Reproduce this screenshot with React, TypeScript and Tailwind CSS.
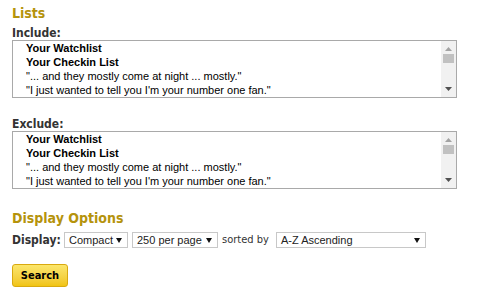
import React from "react";

const verdana = { fontFamily: '"DejaVu Sans Condensed", "DejaVu Sans", Verdana, sans-serif', fontStretch: "condensed" as const };
const arial = { fontFamily: '"Liberation Sans", Arial, sans-serif' };

function ListBox() {
  return (
    <div className="flex h-[58px] w-[445px] border border-[#a9a9a9] bg-white">
      <div className="flex-1 pl-[13px] text-[11px] leading-[14px] text-black" style={arial}>
        <div className="font-bold">Your Watchlist</div>
        <div className="font-bold">Your Checkin List</div>
        <div>"... and they mostly come at night ... mostly."</div>
        <div>"I just wanted to tell you I'm your number one fan."</div>
      </div>
      <div className="flex w-[15px] flex-col items-center bg-[#f1f1f1]">
        <svg width="7" height="4" className="mt-[6px]" viewBox="0 0 7 4">
          <path d="M3.5 0 L7 4 L0 4 Z" fill="#a3a3a3" />
        </svg>
        <div className="mt-[3px] h-[9px] w-[11px] bg-[#c1c1c1]" />
        <div className="flex-1" />
        <svg width="7" height="4" className="mb-[6px]" viewBox="0 0 7 4">
          <path d="M0 0 L7 0 L3.5 4 Z" fill="#505050" />
        </svg>
      </div>
    </div>
  );
}

function Select({ label, width }: { label: string; width: string }) {
  return (
    <div
      className={`flex h-[16px] shrink-0 items-center justify-between whitespace-nowrap border border-[#c8c8c8] bg-white pl-[4px] pr-[5px] text-[11px] text-[#222] ${width}`}
      style={arial}
    >
      <span className="leading-none">{label}</span>
      <svg width="6" height="5" viewBox="0 0 6 5">
        <path d="M0 0 L6 0 L3 5 Z" fill="#111" />
      </svg>
    </div>
  );
}

export default function App() {
  return (
    <div className="h-[294px] w-[490px] bg-white pl-[12px] pt-[4px]" style={verdana}>
      <div className="text-[14px] font-bold leading-[18px] text-[#b5930c]">Lists</div>
      <div className="mt-[5px] text-[12px] font-bold leading-[13px] text-[#333]">Include:</div>
      <ListBox />
      <div className="mt-[20px] text-[12px] font-bold leading-[13px] text-[#333]">Exclude:</div>
      <ListBox />
      <div className="mt-[20px] text-[14px] font-bold leading-[18px] text-[#b5930c]">Display Options</div>
      <div className="mt-[4px] flex h-[18px] items-center whitespace-nowrap">
        <span className="w-[52px] shrink-0 text-[12px] font-bold text-[#333]">Display:</span>
        <Select label="Compact" width="w-[64px]" />
        <div className="w-[4px] shrink-0" />
        <Select label="250 per page" width="w-[86px]" />
        <span className="w-[58px] shrink-0 pl-[4px] text-[11px] text-[#333]">sorted by</span>
        <Select label="A-Z Ascending" width="w-[150px]" />
      </div>
      <button
        className="mt-[15px] h-[23px] w-[56px] rounded-[3px] border border-[#d9a90f] bg-gradient-to-b from-[#fbe66a] to-[#f1c40f] text-[11px] font-bold leading-none text-black"
        style={verdana}
      >
        Search
      </button>
    </div>
  );
}
